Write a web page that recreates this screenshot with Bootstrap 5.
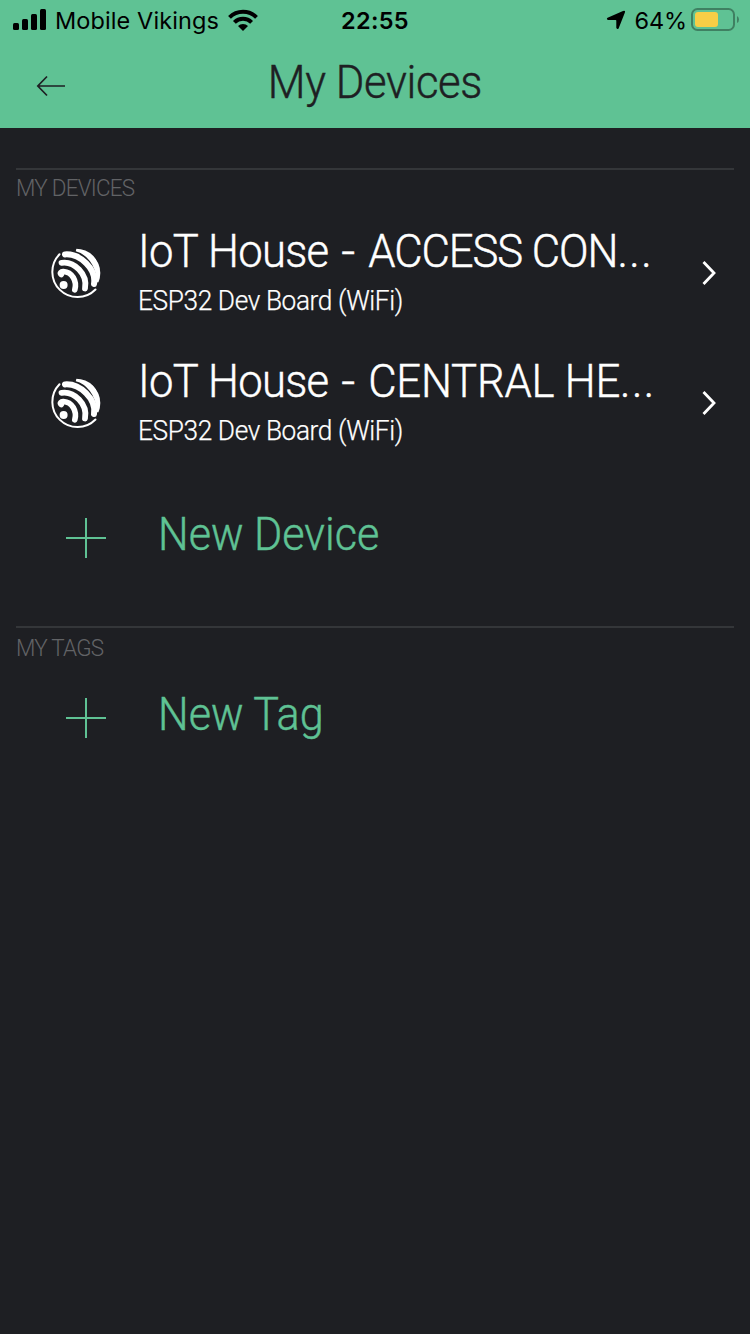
<!DOCTYPE html>
<html lang="en">
<head>
<meta charset="utf-8">
<meta name="viewport" content="width=device-width, initial-scale=1">
<title>My Devices</title>
<link href="https://cdn.jsdelivr.net/npm/bootstrap@5.3.0/dist/css/bootstrap.min.css" rel="stylesheet">
<style>
  :root { --green: #5fc294; --ink: #1e1f23; }
  body { background: var(--ink); color: #fff; font-family: Roboto, "Liberation Sans", sans-serif; font-weight: 300; min-height: 1334px; overflow: hidden; }
  svg { display: block; flex: none; }
  .app-head { background: var(--green); height: 128px; color: var(--ink); }
  .status { height: 42px; line-height: 42px; font-family: Inter, "Liberation Sans", sans-serif; font-size: 23.5px; font-weight: 400; color: #000; padding: 0 11px 0 13px; }
  .status svg { position: relative; top: -1px; }
  .status > * { flex: 1 1 0; min-width: 0; }
  .carrier { margin: 0 9px 0 8px; letter-spacing: .1px; }
  .clock { font-weight: 600; letter-spacing: .3px; padding-right: 2px; }
  .pct { margin: 0 4px 0 8px; letter-spacing: -.1px; }
  .big { font-size: 46.4px; line-height: 56px; white-space: nowrap; }
  .condensed { display: inline-block; transform: scaleX(.94); transform-origin: 0 50%; }
  .big .condensed, .big.condensed { -webkit-text-stroke: .45px currentColor; }
  .page-title { height: 56px; margin-top: 12px; padding-left: 36px; padding-right: 36px; }
  .page-title h1 { font-weight: 300; letter-spacing: -.4px; transform-origin: 50% 50%; }
  .page-title > span { width: 30px; padding-top: 8px; }
  .group { margin: 0 16px; border-top: 2px solid #343639; }
  .group-label { font-size: 23.5px; line-height: 36px; color: #626366; letter-spacing: -.8px; }
  .group-label .condensed { transform: scaleX(.955); }
  .device { height: 130px; padding: 17px 17px 0 36px; }
  .logo { margin: 17px 30px 0 -8px; }
  .chevron { margin-top: 37px; }
  .device-text { flex: 1 1 0; min-width: 0; }
  .device-name { letter-spacing: -.2px; }
  .lead-in { letter-spacing: -.75px; word-spacing: 1px; }
  .dash { display: inline-block; transform: scaleX(1.12); margin: 0 4px 0 3px; }
  .tight { letter-spacing: -1.1px; }
  .dots { letter-spacing: 1.5px; }
  .device-sub { font-size: 27px; line-height: 34px; margin-top: 5px; letter-spacing: -.4px; }
  .device-sub .condensed { transform: scaleX(.972); -webkit-text-stroke: .25px currentColor; }
  .add { color: var(--green); text-decoration: none; padding-left: 50px; }
  .add:hover { color: var(--green); }
  .add .condensed { transform: scaleX(.93); }
  .add svg { margin-right: 52px; margin-top: 8px; }
</style>
</head>
<body>
<svg width="0" height="0" class="position-absolute" aria-hidden="true">
  <clipPath id="disc"><circle cx="32" cy="33" r="24.3"/></clipPath>
  <symbol id="espressif" viewBox="0 0 64 64">
    <g fill="none" stroke="#fff" stroke-linecap="round">
      <path stroke-width="2" d="M15.5 14.3A24 24 0 0 0 51.5 49.5"/>
      <path stroke-width="5.6" d="M17.3 34.5C15.5 33 17 31.3 19.5 31.5C28 32 33.3 41 30.8 49.8"/>
      <path stroke-width="5.8" d="M17.5 22.8C30 20.8 44 34 41 48.5"/>
      <path stroke-width="6" d="M21 14.4C36 13.4 52.5 29 50 44"/>
      <path stroke-width="6.4" clip-path="url(#disc)" stroke-linecap="butt" d="M32.5 8.2C43.3 10.8 56.4 23.3 55.4 42.5"/>
    </g>
    <circle cx="19.6" cy="45" r="4" fill="#fff"/>
  </symbol>
</svg>
<header class="app-head">
  <div class="status d-flex align-items-center">
    <div class="d-flex align-items-center">
      <svg width="34" height="22" viewBox="0 0 34 22"><rect x="0" y="14" width="6" height="7" rx="1.5"/><rect x="9" y="10" width="6" height="11" rx="1.5"/><rect x="18" y="5" width="6" height="16" rx="1.5"/><rect x="27" y="0" width="6" height="21" rx="1.5"/></svg>
      <span class="carrier text-nowrap">Mobile Vikings</span>
      <svg width="30" height="22" viewBox="0 0 30 22"><g fill="none" stroke="#000" stroke-width="4"><path d="M1.5 8.3A19.2 19.2 0 0 1 28.5 8.3"/><path d="M6.4 13.4A12.2 12.2 0 0 1 23.6 13.4"/></g><path d="M10 17A7 7 0 0 1 20 17L15 22Z"/></svg>
    </div>
    <div class="clock text-center">22:55</div>
    <div class="d-flex align-items-center justify-content-end">
      <svg width="20" height="20" viewBox="0 0 20 20"><path d="M17 .9Q19.8 0 18.9 2.5L12.6 18.4Q11.2 20 10.3 17.8V10.6Q10.3 9.9 9.6 9.9H2Q0 9 1.6 7.8Z"/></svg>
      <span class="pct">64%</span>
      <svg class="batt" width="48" height="24" viewBox="0 0 48 24"><rect x="1" y="1" width="42" height="21" rx="5.5" fill="none" stroke="#3f8062" stroke-width="2"/><rect x="4" y="4" width="23" height="15" rx="3" fill="#f7ce46"/><path d="M46 8Q48 9 48 11.5T46 15Z" fill="#3f8062"/></svg>
    </div>
  </div>
  <div class="page-title d-flex align-items-center justify-content-between">
    <span><svg width="30" height="22" viewBox="0 0 30 22"><path d="M29 11H2M11 1.5L1.8 11L11 20.5" fill="none" stroke="#1e1f23" stroke-width="1.7"/></svg></span>
    <h1 class="big condensed m-0">My Devices</h1>
    <span></span>
  </div>
</header>

<main>
  <section class="group" style="margin-top:40px">
    <div class="group-label"><span class="condensed">MY DEVICES</span></div>
    <div class="device d-flex">
      <svg class="logo" width="64" height="64"><use href="#espressif"/></svg>
      <div class="device-text">
        <div class="big device-name"><span class="condensed"><span class="lead-in">IoT House</span> <span class="dash">-</span> <span class="tight">ACCESS CON</span><span class="dots">...</span></span></div>
        <div class="device-sub"><span class="condensed">ESP32 Dev Board (WiFi)</span></div>
      </div>
      <svg class="chevron" width="16" height="26" viewBox="0 0 16 26"><path d="M2.5 2L13 13L2.5 24" fill="none" stroke="#fff" stroke-width="2.8"/></svg>
    </div>
    <div class="device d-flex">
      <svg class="logo" width="64" height="64"><use href="#espressif"/></svg>
      <div class="device-text">
        <div class="big device-name"><span class="condensed"><span class="lead-in">IoT House</span> <span class="dash">-</span> CENTRAL HE<span class="dots">...</span></span></div>
        <div class="device-sub"><span class="condensed">ESP32 Dev Board (WiFi)</span></div>
      </div>
      <svg class="chevron" width="16" height="26" viewBox="0 0 16 26"><path d="M2.5 2L13 13L2.5 24" fill="none" stroke="#fff" stroke-width="2.8"/></svg>
    </div>
    <a class="add big d-flex align-items-center" href="#" style="margin-top:40px">
      <svg width="40" height="40"><path d="M20 0V40M0 20H40" stroke="#5fc294" stroke-width="2"/></svg><span class="condensed">New Device</span>
    </a>
  </section>
  <section class="group" style="margin-top:64px">
    <div class="group-label" style="padding-top:2px"><span class="condensed">MY TAGS</span></div>
    <a class="add big d-flex align-items-center" href="#" style="margin-top:20px">
      <svg width="40" height="40"><path d="M20 0V40M0 20H40" stroke="#5fc294" stroke-width="2"/></svg><span class="condensed">New Tag</span>
    </a>
  </section>
</main>
<script src="https://cdn.jsdelivr.net/npm/bootstrap@5.3.0/dist/js/bootstrap.bundle.min.js"></script>
</body>
</html>
